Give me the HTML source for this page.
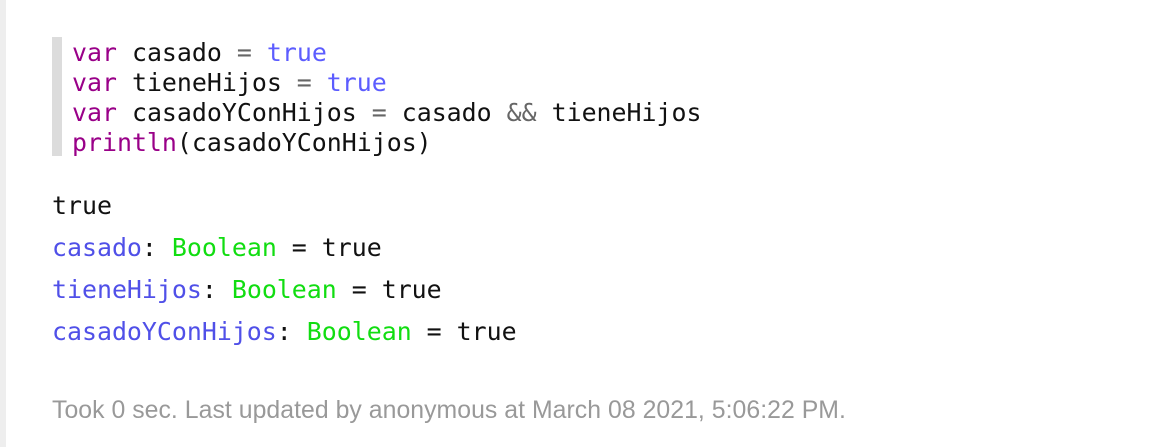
<!DOCTYPE html>
<html><head><meta charset="utf-8"><style>
html,body{margin:0;padding:0;width:1161px;height:447px;background:#fff;overflow:hidden}
.strip{position:absolute;left:0;top:0;width:6px;height:447px;background:#eeeeee}
.mono{font-family:"DejaVu Sans Mono","Liberation Mono",monospace;font-size:24.9px;color:#111;white-space:pre}
.code{position:absolute;left:52px;top:37px;width:10px;height:119px;background:#dcdcdc}
.cl{position:absolute;left:72px}
.k{color:#990088}.b{color:#5c5cff}.o{color:#666}
.v{color:#5050e8}.t{color:#11dd11}
.foot{position:absolute;left:52px;top:397px;font-family:"Liberation Sans",Arial,sans-serif;font-size:24.8px;letter-spacing:0.04px;color:#999}
</style></head><body>
<div class="strip"></div>
<div class="code"></div>
<div class="mono cl" style="top:38px;line-height:30px"><span class="k">var</span> casado <span class="o">=</span> <span class="b">true</span>
<span class="k">var</span> tieneHijos <span class="o">=</span> <span class="b">true</span>
<span class="k">var</span> casadoYConHijos <span class="o">=</span> casado <span class="o">&amp;&amp;</span> tieneHijos
<span class="k">println</span>(casadoYConHijos)</div>
<div class="mono" style="position:absolute;left:52px;top:185px;line-height:42px">true
<span class="v">casado</span>: <span class="t">Boolean</span> = true
<span class="v">tieneHijos</span>: <span class="t">Boolean</span> = true
<span class="v">casadoYConHijos</span>: <span class="t">Boolean</span> = true</div>
<div class="foot">Took 0 sec. Last updated by anonymous at March 08 2021, 5:06:22 PM.</div>
</body></html>
